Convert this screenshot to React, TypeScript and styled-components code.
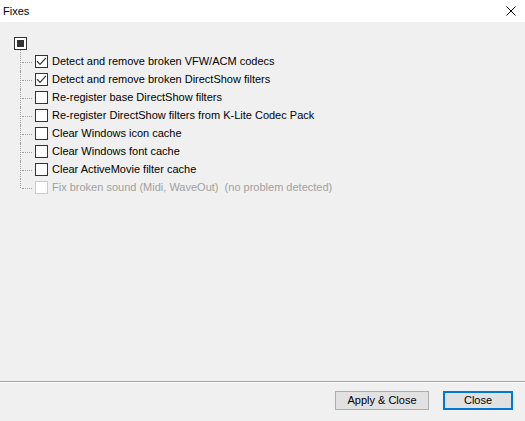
import React from "react";
import styled, { createGlobalStyle, css } from "styled-components";

const GlobalStyle = createGlobalStyle`
  html, body { margin: 0; padding: 0; background: #f0f0f0; }
  * { box-sizing: border-box; }
`;

const Window = styled.div`
  width: 525px;
  height: 421px;
  display: flex;
  flex-direction: column;
  background: #f0f0f0;
  font-family: "Liberation Sans", Arial, sans-serif;
  font-size: 11px;
  color: #000;
  overflow: hidden;
`;

const TitleBar = styled.div`
  height: 22px;
  flex: 0 0 22px;
  background: #fff;
  display: flex;
  align-items: center;
  justify-content: space-between;
  padding: 0 9px 0 3px;
`;

const Title = styled.span`
  line-height: 22px;
`;

const CloseGlyph = styled.svg`
  display: block;
`;

const Content = styled.div`
  flex: 1;
  padding-top: 13px;
`;

const Row = styled.div<{ $indent: number }>`
  height: 18px;
  display: flex;
  align-items: flex-start;
  padding-left: ${(p) => p.$indent}px;
`;

const Connector = styled.span<{ $first?: boolean; $last?: boolean }>`
  position: relative;
  width: 15px;
  height: 18px;
  flex: 0 0 15px;
  &::before {
    content: "";
    position: absolute;
    left: 0;
    top: ${(p) => (p.$first ? "-3px" : "0")};
    height: ${(p) => (p.$last ? (p.$first ? "12px" : "9px") : p.$first ? "21px" : "18px")};
    border-left: 1px dotted #a0a0a0;
  }
  &::after {
    content: "";
    position: absolute;
    left: 2px;
    top: 9px;
    width: 10px;
    border-top: 1px dotted #a0a0a0;
  }
`;

const Box = styled.span<{ $disabled?: boolean }>`
  width: 13px;
  height: 13px;
  flex: 0 0 13px;
  margin-top: 2px;
  background: #fff;
  border: 1px solid ${(p) => (p.$disabled ? "#cccccc" : "#333333")};
  display: flex;
  align-items: center;
  justify-content: center;
`;

const Indeterminate = styled.span`
  width: 7px;
  height: 7px;
  background: #333333;
`;

const Label = styled.span<{ $disabled?: boolean }>`
  margin-left: 4px;
  line-height: 17px;
  white-space: pre;
  ${(p) =>
    p.$disabled &&
    css`
      color: #a0a0a0;
    `}
`;

const Footer = styled.div`
  height: 40px;
  flex: 0 0 40px;
  border-top: 1px solid #a0a0a0;
  box-shadow: inset 0 1px 0 #ffffff;
  display: flex;
  justify-content: flex-end;
  align-items: flex-start;
  gap: 14px;
  padding: 9px 12px 0 0;
`;

const Button = styled.button<{ $default?: boolean; $w: number }>`
  width: ${(p) => p.$w}px;
  height: 19px;
  padding: 0;
  margin: 0;
  font-family: inherit;
  font-size: 11px;
  line-height: 15px;
  color: #000;
  background: #e1e1e1;
  border: 1px solid ${(p) => (p.$default ? "#0078d7" : "#adadad")};
  ${(p) =>
    p.$default &&
    css`
      box-shadow: inset 0 0 0 1px #0078d7;
    `}
`;

const Check = () => (
  <svg width="11" height="11" viewBox="0 0 11 11">
    <path d="M1 5.2 L4 8.3 L10 1.8" fill="none" stroke="#333" strokeWidth="1.2" />
  </svg>
);

type Item = { label: string; checked?: boolean; disabled?: boolean };

const items: Item[] = [
  { label: "Detect and remove broken VFW/ACM codecs", checked: true },
  { label: "Detect and remove broken DirectShow filters", checked: true },
  { label: "Re-register base DirectShow filters" },
  { label: "Re-register DirectShow filters from K-Lite Codec Pack" },
  { label: "Clear Windows icon cache" },
  { label: "Clear Windows font cache" },
  { label: "Clear ActiveMovie filter cache" },
  { label: "Fix broken sound (Midi, WaveOut)  (no problem detected)", disabled: true },
];

export default function App() {
  return (
    <>
      <GlobalStyle />
      <Window>
        <TitleBar>
          <Title>Fixes</Title>
          <CloseGlyph width="10" height="10" viewBox="0 0 10 10">
            <path d="M0.5 0.5 L9.5 9.5 M9.5 0.5 L0.5 9.5" stroke="#000" strokeWidth="1" />
          </CloseGlyph>
        </TitleBar>
        <Content>
          <Row $indent={14}>
            <Box>
              <Indeterminate />
            </Box>
          </Row>
          {items.map((it, i) => (
            <Row key={it.label} $indent={20}>
              <Connector $first={i === 0} $last={i === items.length - 1} />
              <Box $disabled={it.disabled}>{it.checked && <Check />}</Box>
              <Label $disabled={it.disabled}>{it.label}</Label>
            </Row>
          ))}
        </Content>
        <Footer>
          <Button $w={94}>Apply &amp; Close</Button>
          <Button $w={70} $default>
            Close
          </Button>
        </Footer>
      </Window>
    </>
  );
}
